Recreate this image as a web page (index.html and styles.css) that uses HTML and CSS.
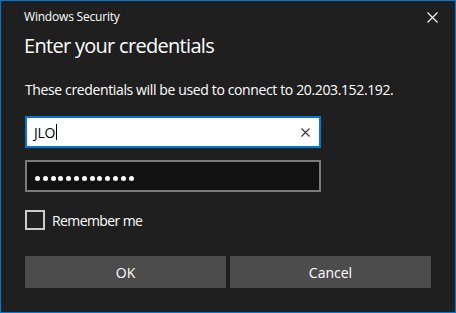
FILE: index.html
```html
<!DOCTYPE html>
<html lang="en">
<head>
  <meta charset="UTF-8">
  <meta name="viewport" content="width=device-width, initial-scale=1.0">
  <title>Windows Security</title>
  <link rel="stylesheet" href="styles.css">
</head>
<body>
  <div class="dialog">
    <div class="titlebar">
      <span class="title">Windows Security</span>
      <button class="close" aria-label="Close">
        <svg width="11" height="11" viewBox="0 0 11 11"><path d="M0.5 0.5 L10.5 10.5 M10.5 0.5 L0.5 10.5" stroke="#fff" stroke-width="1.1"/></svg>
      </button>
    </div>

    <div class="content">
      <h1>Enter your credentials</h1>
      <p class="message">These credentials will be used to connect to 20.203.152.192.</p>

      <div class="field field-active">
        <span class="value">JLO</span><span class="caret"></span>
        <svg class="clear" width="9" height="9" viewBox="0 0 9 9"><path d="M0.5 0.5 L8.5 8.5 M8.5 0.5 L0.5 8.5" stroke="#333" stroke-width="1.1"/></svg>
      </div>

      <div class="field field-password">
        <span class="dot"></span><span class="dot"></span><span class="dot"></span><span class="dot"></span>
        <span class="dot"></span><span class="dot"></span><span class="dot"></span><span class="dot"></span>
        <span class="dot"></span><span class="dot"></span><span class="dot"></span><span class="dot"></span>
        <span class="dot"></span>
      </div>

      <label class="remember">
        <span class="box"></span>
        <span>Remember me</span>
      </label>

      <div class="buttons">
        <button type="button">OK</button>
        <button type="button">Cancel</button>
      </div>
    </div>
  </div>
</body>
</html>
```

FILE: styles.css
```css
* {
  margin: 0;
  padding: 0;
  box-sizing: border-box;
  font-family: 'Open Sans', 'Noto Sans', sans-serif;
}
body {
  background: #1f1f1f;
}
.dialog {
  width: 456px;
  height: 313px;
  border: 1px solid #0078d7;
  background: #1f1f1f;
  color: #fff;
}
.titlebar {
  display: flex;
  justify-content: space-between;
  align-items: center;
  height: 31px;
  padding-left: 23px;
}
.title {
  font-size: 12px;
  letter-spacing: -0.2px;
}
.close {
  width: 46px;
  height: 31px;
  border: none;
  background: transparent;
  display: flex;
  align-items: center;
  justify-content: center;
  padding-top: 2px;
}
.content {
  padding: 0 24px;
}
h1 {
  font-size: 20px;
  font-weight: normal;
  line-height: 28px;
  letter-spacing: -0.7px;
  margin-left: -1px;
}
.message {
  font-size: 14px;
  line-height: 20px;
  margin-top: 20px;
  letter-spacing: -0.37px;
}
.field {
  display: flex;
  align-items: center;
  width: 296px;
  height: 32px;
  margin-top: 16px;
  padding-left: 7px;
  border: 2px solid #7a7a7a;
}
.field-active {
  background: #fff;
  border-color: #0078d7;
  color: #000;
}
.field-active .value {
  font-size: 14px;
  letter-spacing: -0.3px;
}
.caret {
  width: 1px;
  height: 16px;
  background: #000;
  margin-left: 1px;
}
.clear {
  margin-left: auto;
  margin-right: 9px;
}
.field-password {
  margin-top: 12px;
  background: #111;
  gap: 2.8px;
  padding-left: 8px;
  padding-top: 4px;
}
.dot {
  width: 5px;
  height: 5px;
  border-radius: 50%;
  background: #fff;
}
.remember {
  display: flex;
  align-items: center;
  gap: 7px;
  margin-top: 18px;
  font-size: 14px;
  letter-spacing: -0.6px;
}
.box {
  width: 20px;
  height: 20px;
  border: 2px solid #cccccc;
}
.buttons {
  display: grid;
  grid-template-columns: 1fr 1fr;
  gap: 4px;
  margin-top: 26px;
}
.buttons button {
  height: 32px;
  border: none;
  background: #4c4c4c;
  color: #fff;
  font-size: 14px;
}
```
